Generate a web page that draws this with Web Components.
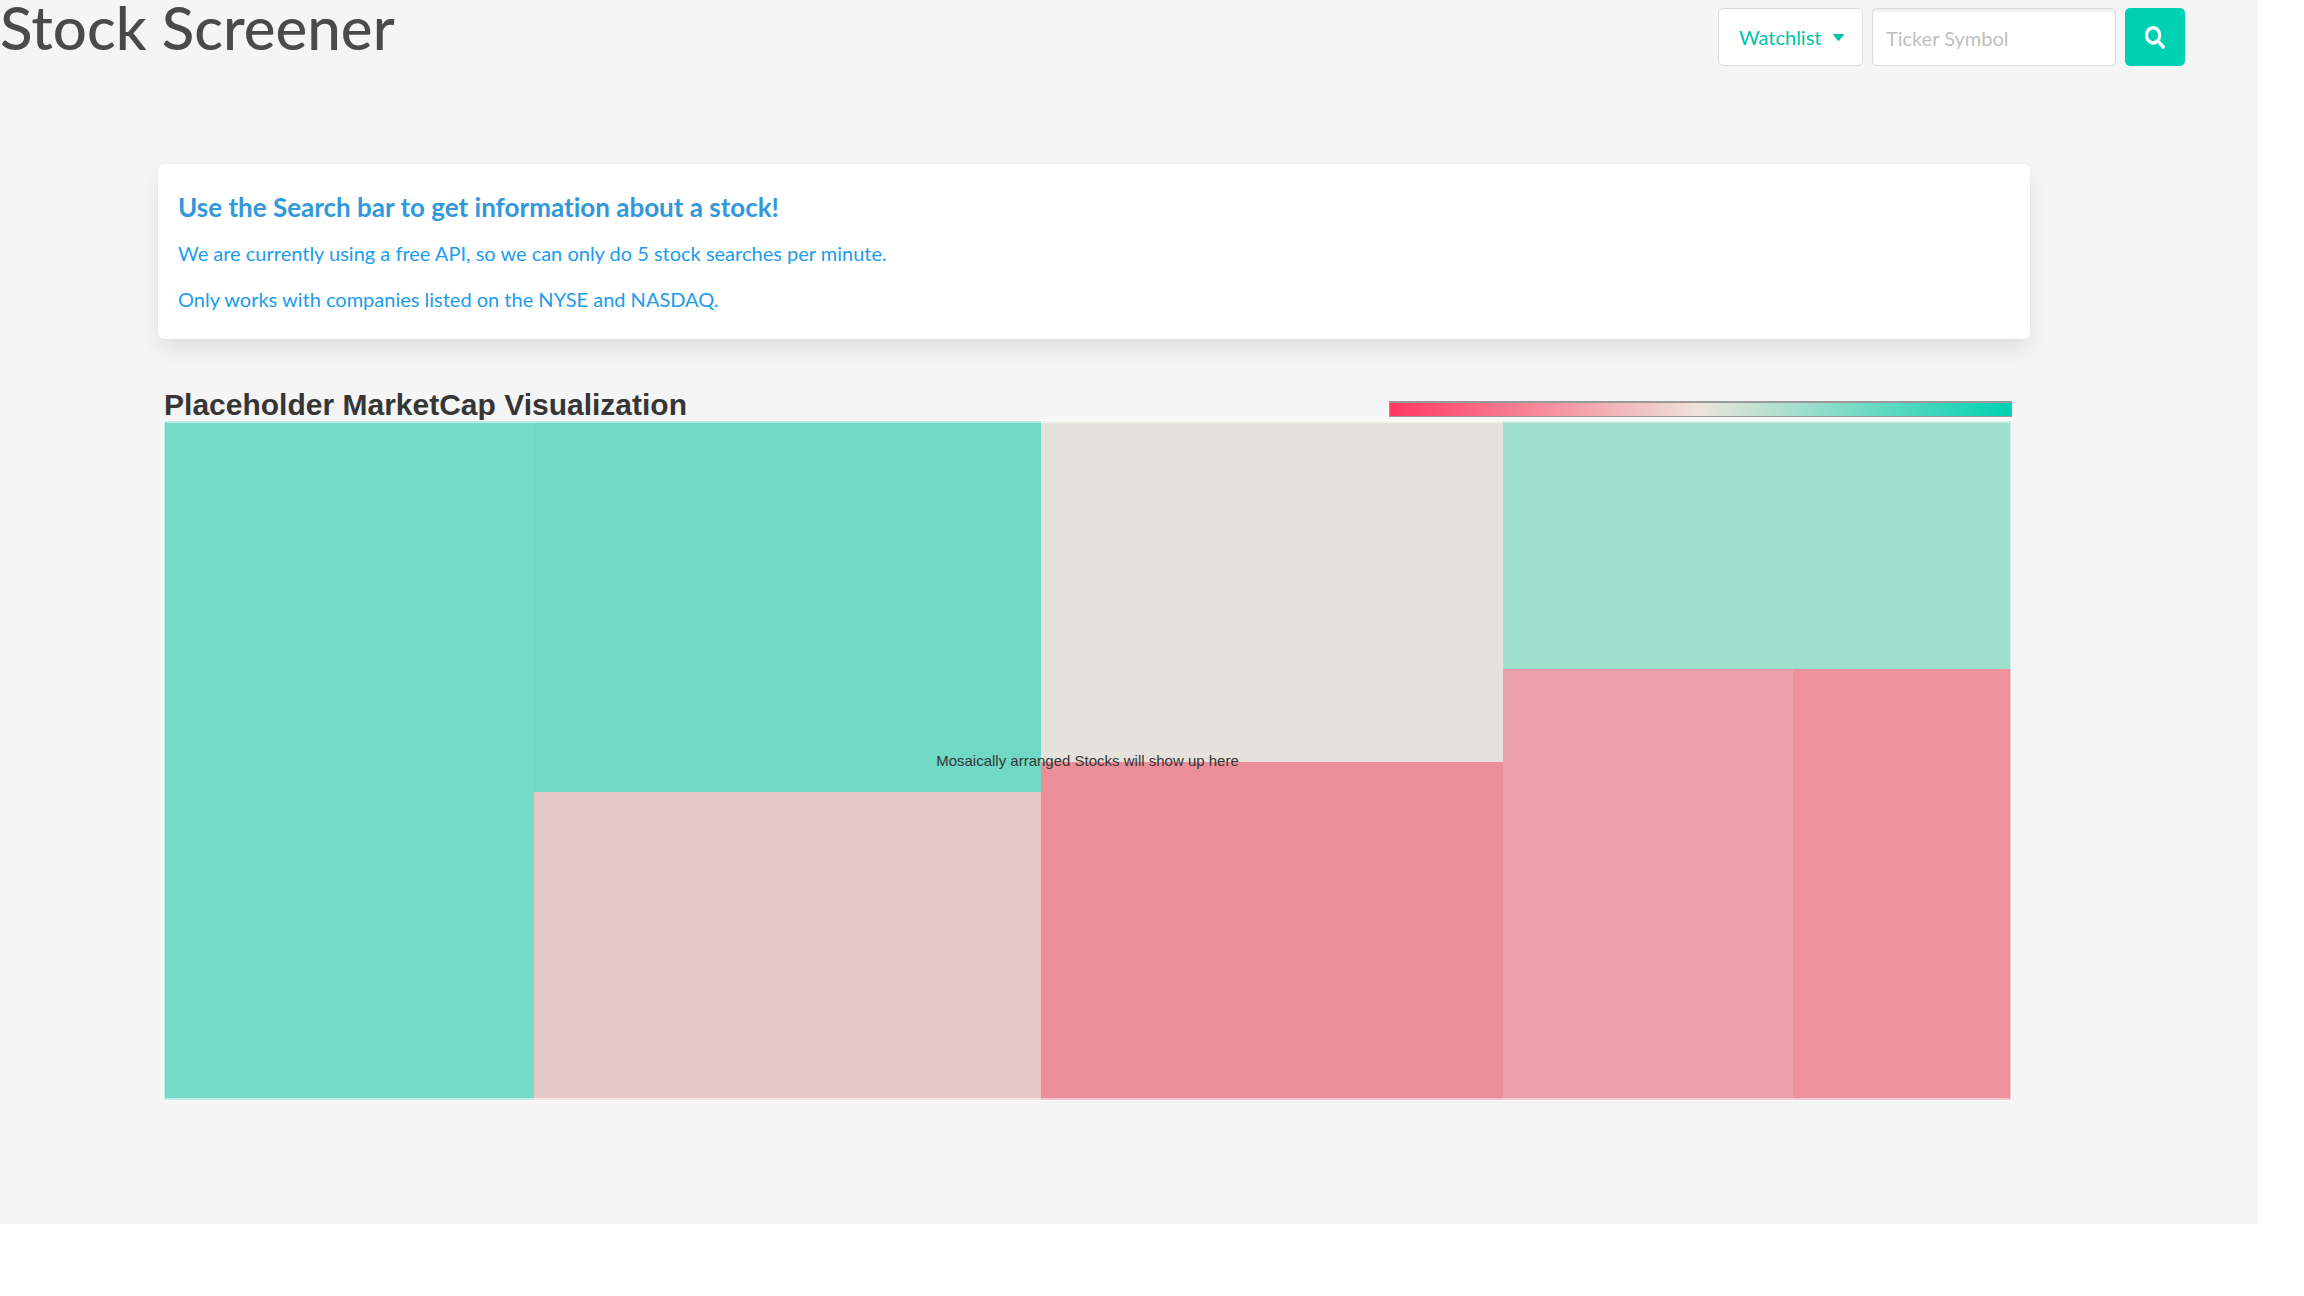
<!DOCTYPE html>
<html lang="en">
<head>
<meta charset="utf-8">
<title>Stock Screener</title>
<style>
  html, body { margin: 0; background: #fff; }
  body { font-family: Lato, "Open Sans", "Noto Sans", sans-serif; font-size: 20px; font-variant-ligatures: none; color: #4a4a4a; }
</style>
</head>
<body>
<screener-app>
  <screener-navbar slot="nav"></screener-navbar>
  <info-card>
    <span slot="title">Use the Search bar to get information about a stock!</span>
    <p>We are currently using a free API, so we can only do 5 stock searches per minute.</p>
    <p>Only works with companies listed on the NYSE and NASDAQ.</p>
  </info-card>
  <market-map heading="Placeholder MarketCap Visualization">Mosaically arranged Stocks will show up here</market-map>
</screener-app>

<script>
class Base extends HTMLElement {
  constructor() {
    super();
    this.attachShadow({ mode: "open" }).innerHTML = this.template();
  }
}

customElements.define("screener-app", class extends Base {
  template() {
    return `<style>
      :host { display: block; margin-right: 2%; padding-bottom: 124px; background: whitesmoke; }
      main { display: flex; flex-direction: column; gap: 55px; margin: 0 10.1% 0 7%; padding-top: 90px; }
    </style>
    <slot name="nav"></slot>
    <main><slot></slot></main>`;
  }
});

customElements.define("screener-navbar", class extends Base {
  template() {
    return `<style>
      :host { display: flex; justify-content: space-between; align-items: flex-start; height: 74px; }
      h1 { margin: 0; font-size: 60px; line-height: 54px; font-weight: 500; white-space: nowrap; }
      form { display: flex; gap: 9px; padding: 8px 73px 0 0; }
      button, input { box-sizing: border-box; height: 58px; margin: 0; border: 1px solid #dbdbdb; border-radius: 5px; background: #fff; font: inherit; }
      .menu { display: flex; align-items: center; justify-content: space-between; padding: 0 18px 0 20px; color: #00c4a7; width: 145px; }
      .menu svg { flex: none; }
      input { width: 244px; padding: 2px 13px 0; box-shadow: inset 0 2px 3px rgba(10,10,10,.08); }
      input::placeholder { color: #bfbfbf; opacity: 1; }
      .go { width: 60px; display: grid; place-items: center; padding: 0; border: 0; background: #00d1b2; color: #fff; }
    </style>
    <h1>Stock Screener</h1>
    <form>
      <button type="button" class="menu" aria-haspopup="true">Watchlist
        <svg width="11" height="7" viewBox="0 0 10 6" preserveAspectRatio="none" aria-hidden="true"><path d="M.6 0h8.800q.9 0 .3.8L5.700 5.500q-.7.8-1.400 0L.3.8Q-.3 0 .6 0z" fill="currentColor"/></svg>
      </button>
      <input type="text" aria-label="Ticker Symbol" placeholder="Ticker Symbol">
      <button type="button" class="go" aria-label="Search">
        <svg width="20" height="23" viewBox="0 0 512 512" preserveAspectRatio="none" aria-hidden="true"><path fill="currentColor" d="M505 442.700 405.300 343c-4.500-4.500-10.600-7-17-7H372c27.600-35.300 44-79.700 44-128C416 93.100 322.900 0 208 0S0 93.100 0 208s93.100 208 208 208c48.300 0 92.700-16.400 128-44v16.300c0 6.400 2.500 12.500 7 17l99.700 99.700c9.400 9.400 24.600 9.400 33.900 0l28.300-28.300c9.400-9.400 9.400-24.600.1-34zM208 336c-70.700 0-128-57.200-128-128 0-70.700 57.200-128 128-128 70.700 0 128 57.200 128 128 0 70.700-57.200 128-128 128z"/></svg>
      </button>
    </form>`;
  }
});

customElements.define("info-card", class extends Base {
  template() {
    return `<style>
      :host { display: block; padding: 21px 20px 17px; border-radius: 6px; background: #fff; color: #209cee;
        box-shadow: 0 12px 24px -3px rgba(10,10,10,.1), 0 0 0 1px rgba(10,10,10,.02); }
      h2 { margin: 0; font-size: 26px; line-height: 45px; font-weight: 700; color: #3298dc; }
      ::slotted(p) { margin: 0; line-height: 46px; }
    </style>
    <h2><slot name="title"></slot></h2>
    <slot></slot>`;
  }
});

customElements.define("market-map", class extends Base {
  template() {
    return `<style>
      :host { display: block; padding: 0 18px 0 6px; font-family: "Liberation Sans", Arial, sans-serif; }
      header { display: flex; justify-content: space-between; align-items: flex-end; height: 27px; }
      h3 { margin: 0; font-size: 30px; line-height: 32px; font-weight: 700; color: #363636; white-space: nowrap; }
      .legend { box-sizing: border-box; width: 33.7%; height: 16px; margin-bottom: 4px; border: 1px solid #999; border-top-width: 2px;
        background: linear-gradient(90deg, #ff3860, #ede4d9 50%, #00d1b2); }
      .map { position: relative; display: flex; height: 679px; margin-right: 1px; outline: 1px solid #fff; }
      .map::after { content: ""; position: absolute; inset: 0; border: solid rgba(255,255,255,.5); border-width: 2px 1px; }
      .col { display: flex; flex-direction: column; }
      .row { display: flex; }
      .caption { position: absolute; inset: 0; display: grid; place-items: center; font-size: 15px; color: #363636; }
    </style>
    <header><h3></h3><div class="legend" role="img" aria-label="Price change scale"></div></header>
    <div class="map">
      <div style="flex:370;background:#75dbc8"></div>
      <div class="col" style="flex:507"><div style="flex:371;background:#6fd9c5"></div><div style="flex:308;background:#e6c8c6"></div></div>
      <div class="col" style="flex:462"><div style="flex:341;background:#e4e2da"></div><div style="flex:338;background:#ec8d9a"></div></div>
      <div class="col" style="flex:508"><div style="flex:248;background:#9fdfce"></div>
        <div class="row" style="flex:431"><div style="flex:290;background:#ec9fa9"></div><div style="flex:218;background:#ed919d"></div></div></div>
      <div class="caption"><slot></slot></div>
    </div>`;
  }
  connectedCallback() {
    this.shadowRoot.querySelector("h3").textContent = this.getAttribute("heading");
  }
});
</script>
</body>
</html>
